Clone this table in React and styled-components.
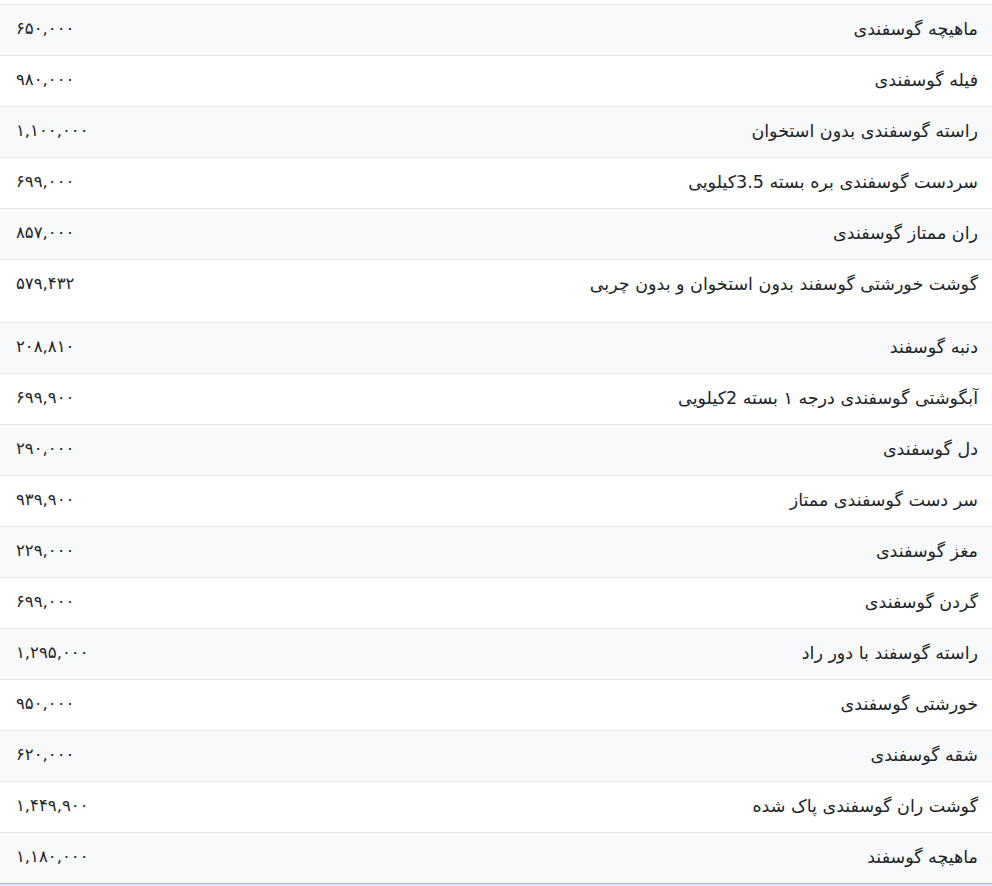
import styled, { createGlobalStyle } from "styled-components";

const GlobalStyle = createGlobalStyle`
  html, body {
    margin: 0;
    padding: 0;
    background: #fff;
  }
  body {
    font-family: "DejaVu Sans", "Noto Sans", sans-serif;
    color: #212529;
  }
`;

const items = [
  { name: "ماهیچه گوسفندی", price: "۶۵۰,۰۰۰" },
  { name: "فیله گوسفندی", price: "۹۸۰,۰۰۰" },
  { name: "راسته گوسفندی بدون استخوان", price: "۱,۱۰۰,۰۰۰" },
  { name: "سردست گوسفندی بره بسته 3.5کیلویی", price: "۶۹۹,۰۰۰" },
  { name: "ران ممتاز گوسفندی", price: "۸۵۷,۰۰۰" },
  { name: "گوشت خورشتی گوسفند بدون استخوان و بدون چربی", price: "۵۷۹,۴۳۲", tall: true },
  { name: "دنبه گوسفند", price: "۲۰۸,۸۱۰" },
  { name: "آبگوشتی گوسفندی درجه ۱ بسته 2کیلویی", price: "۶۹۹,۹۰۰" },
  { name: "دل گوسفندی", price: "۲۹۰,۰۰۰" },
  { name: "سر دست گوسفندی ممتاز", price: "۹۳۹,۹۰۰" },
  { name: "مغز گوسفندی", price: "۲۲۹,۰۰۰" },
  { name: "گردن گوسفندی", price: "۶۹۹,۰۰۰" },
  { name: "راسته گوسفند با دور راد", price: "۱,۲۹۵,۰۰۰" },
  { name: "خورشتی گوسفندی", price: "۹۵۰,۰۰۰" },
  { name: "شقه گوسفندی", price: "۶۲۰,۰۰۰" },
  { name: "گوشت ران گوسفندی پاک شده", price: "۱,۴۴۹,۹۰۰" },
  { name: "ماهیچه گوسفند", price: "۱,۱۸۰,۰۰۰" },
];

const Page = styled.div`
  padding-top: 4px;
`;

const PriceTable = styled.table`
  width: 100%;
  border-collapse: collapse;
  direction: rtl;
`;

const Row = styled.tr`
  background: ${(p) => (p.$striped ? "#f8f9fa" : "#fff")};
  border-top: 1px solid #e6e8eb;
`;

const Cell = styled.td`
  height: 24px;
  padding: 12px 14px ${(p) => (p.$tall ? "26px" : "14px")} 16px;
  vertical-align: top;
  font-size: ${(p) => (p.$price ? "16.5px" : "17.5px")};
  line-height: 24px;
  text-align: ${(p) => (p.$price ? "left" : "right")};
  white-space: nowrap;
`;

const Footer = styled.div`
  border-top: 1px solid #b3b9c2;
  background: #dfe5f5;
  height: 3px;
`;

export default function App() {
  return (
    <Page>
      <GlobalStyle />
      <PriceTable>
        <tbody>
          {items.map((item, i) => (
            <Row key={i} $striped={i % 2 === 0}>
              <Cell $tall={item.tall}>{item.name}</Cell>
              <Cell $price $tall={item.tall}>
                {item.price}
              </Cell>
            </Row>
          ))}
        </tbody>
      </PriceTable>
      <Footer />
    </Page>
  );
}
